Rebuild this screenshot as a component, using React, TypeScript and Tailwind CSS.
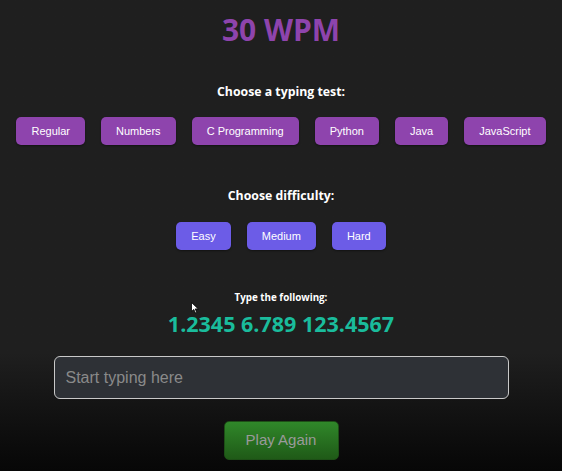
import React from "react";

const tests = ["Regular", "Numbers", "C Programming", "Python", "Java", "JavaScript"];
const levels = ["Easy", "Medium", "Hard"];

export default function App() {
  const [text, setText] = React.useState("");

  return (
    <div className="relative min-h-[471px] w-full overflow-hidden bg-linear-to-b from-[#1f1f1f] from-75% to-[#070707] font-['Open_Sans',sans-serif]">
      <div className="flex flex-col items-center pt-[12px]">
        <h1 className="text-[30px] leading-[36px] font-bold text-[#8e44ad]">30 WPM</h1>

        <h2 className="mt-[35px] text-[12.3px] leading-[18px] font-bold text-white">
          Choose a typing test:
        </h2>
        <div className="mt-[16px] flex gap-[16px]">
          {tests.map((t) => (
            <button
              key={t}
              className="h-[28px] rounded-[5px] bg-[#8e44ad] px-[15px] font-['Liberation_Sans',Arial,sans-serif] text-[11px] text-white shadow-[0_1px_2px_rgba(0,0,0,0.4)]"
            >
              {t}
            </button>
          ))}
        </div>

        <h2 className="mt-[42px] text-[12.3px] leading-[18px] font-bold text-white">
          Choose difficulty:
        </h2>
        <div className="mt-[17px] flex gap-[16px]">
          {levels.map((l) => (
            <button
              key={l}
              className="h-[28px] rounded-[5px] bg-[#6c5ce7] px-[15px] font-['Liberation_Sans',Arial,sans-serif] text-[11px] text-white shadow-[0_1px_2px_rgba(0,0,0,0.4)]"
            >
              {l}
            </button>
          ))}
        </div>

        <p className="mt-[40px] text-[9.8px] leading-[15px] font-bold text-white">Type the following:</p>
        <p className="mt-[5px] text-[21.5px] leading-[28px] font-bold text-[#1abc9c]">
          1.2345 6.789 123.4567
        </p>

        <input
          value={text}
          onChange={(e) => setText(e.target.value)}
          placeholder="Start typing here"
          className="mt-[18px] h-[43px] w-[455px] rounded-[6px] border-[1.5px] border-[#c9c9c9] bg-[#2e3136] px-[11px] font-['Liberation_Sans',Arial,sans-serif] text-[16px] text-white outline-none placeholder:text-[#8a8a8a]"
        />

        <button className="mt-[22px] h-[39px] w-[115px] rounded-[5px] border border-[#1d4f16] bg-linear-to-b from-[#30882a] to-[#1f5a17] font-['Liberation_Sans',Arial,sans-serif] text-[15px] text-[#9a9a9a]">
          Play Again
        </button>
      </div>

      <svg className="absolute left-[191px] top-[302px]" width="8" height="12" viewBox="0 0 8 12">
        <path d="M0.5 0.5 L0.5 9.5 L2.8 7.4 L4.4 11 L5.8 10.4 L4.2 6.9 L7.3 6.9 Z" fill="#fff" stroke="#000" strokeWidth="0.8" />
      </svg>
    </div>
  );
}
